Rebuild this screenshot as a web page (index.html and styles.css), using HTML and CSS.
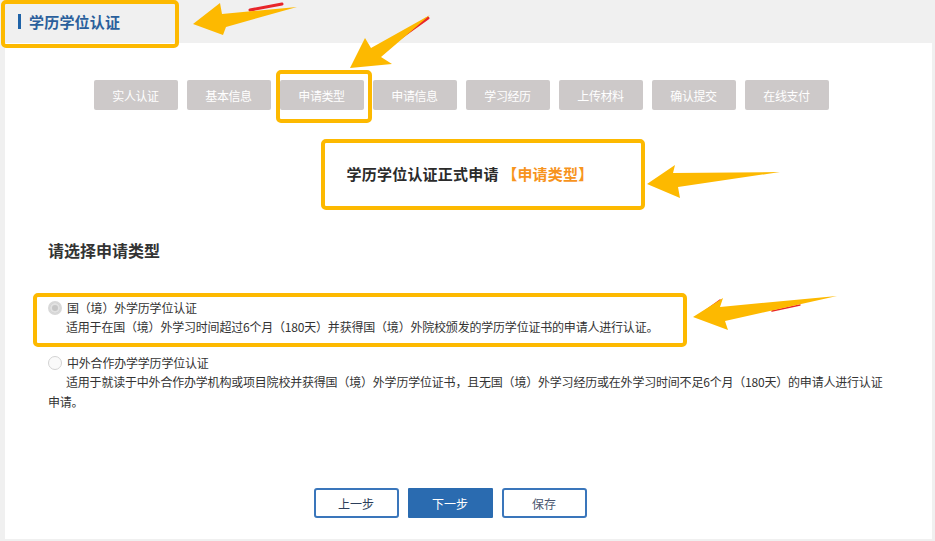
FILE: index.html
```html
<!DOCTYPE html>
<html lang="zh-CN">
<head>
<meta charset="utf-8">
<title>学历学位认证</title>
<link rel="stylesheet" href="styles.css">
</head>
<body>
<div class="page">
  <header class="header">
    <span class="header-bar"></span>
    <h1 class="header-title">学历学位认证</h1>
  </header>
  <main class="panel">
    <nav class="steps">
      <span class="step">实人认证</span>
      <span class="step">基本信息</span>
      <span class="step">申请类型</span>
      <span class="step">申请信息</span>
      <span class="step">学习经历</span>
      <span class="step">上传材料</span>
      <span class="step">确认提交</span>
      <span class="step">在线支付</span>
    </nav>
    <h2 class="form-title">学历学位认证正式申请 <span class="form-title-tag">【申请类型】</span></h2>
    <h3 class="section-title">请选择申请类型</h3>
    <div class="options">
      <div class="option">
        <div class="option-head"><span class="radio radio-checked"></span><span class="option-label">国（境）外学历学位认证</span></div>
        <p class="option-desc">适用于在国（境）外学习时间超过6个月（180天）并获得国（境）外院校颁发的学历学位证书的申请人进行认证。</p>
      </div>
      <div class="option">
        <div class="option-head"><span class="radio"></span><span class="option-label">中外合作办学学历学位认证</span></div>
        <p class="option-desc">适用于就读于中外合作办学机构或项目院校并获得国（境）外学历学位证书，且无国（境）外学习经历或在外学习时间不足6个月（180天）的申请人进行认证申请。</p>
      </div>
    </div>
    <div class="actions">
      <button class="btn btn-outline">上一步</button>
      <button class="btn btn-primary">下一步</button>
      <button class="btn btn-outline btn-muted">保存</button>
    </div>
  </main>
  <svg class="annotations" width="935" height="541" viewBox="0 0 935 541">
    <g fill="none" stroke="#fdb900" stroke-width="4" stroke-linejoin="round">
      <rect x="3" y="2" width="174" height="44" rx="3"/>
      <rect x="278" y="72" width="92" height="49" rx="3"/>
      <rect x="323" y="141" width="320" height="67" rx="3"/>
      <rect x="35" y="295" width="650" height="50" rx="3"/>
    </g>
    <g stroke="#e8262a" stroke-width="3" stroke-linecap="round" fill="none">
      <path d="M250 10 L282 4"/>
      <path d="M400 38 L428 18"/>
      <path d="M720 300 L698 316" stroke-width="1.5"/>
      <path d="M772 311 L800 305" stroke-width="1.5"/>
    </g>
    <g fill="#fdb900">
      <polygon points="193,24 220,3 222,14 297,7 226,27 223,35"/>
      <polygon points="350,68 365,38 371,48 430,15 381,57 392,64"/>
      <polygon points="647,184 675,165 673,173 780,172 678,187 680,198"/>
      <polygon points="693,317 723,298 720,307 837,296 725,321 728,330"/>
    </g>
  </svg>
</div>
</body>
</html>
```
FILE: styles.css
```css
* {
  box-sizing: border-box;
}

html, body {
  margin: 0;
  padding: 0;
}

body {
  background: #f0f0f0;
  font-family: "Noto Sans CJK SC", "Noto Sans", "Liberation Sans", sans-serif;
  color: #333;
  width: 935px;
  height: 541px;
  overflow: hidden;
}

.page {
  position: relative;
  width: 935px;
  height: 541px;
}

.header {
  height: 43px;
  display: flex;
  align-items: center;
  padding-left: 18px;
  gap: 8px;
}

.header-bar {
  width: 3px;
  height: 15px;
  background: #1f63a8;
}

.header-title {
  margin: 0;
  font-size: 15px;
  font-weight: 700;
  color: #2a5f9c;
  letter-spacing: 0.2px;
  line-height: 20px;
}

.panel {
  background: #fff;
  margin: 0 3px 0 5px;
  height: 496px;
  padding: 37px 40px 0 43px;
  display: flex;
  flex-direction: column;
}

.steps {
  display: flex;
  justify-content: center;
  gap: 9px;
  padding-left: 14px;
  padding-right: 32px;
}

.step {
  width: 84px;
  height: 30px;
  background: #cdc9c9;
  border-radius: 2px;
  color: #fff;
  font-size: 12px;
  letter-spacing: -0.4px;
  display: flex;
  align-items: center;
  justify-content: center;
}

.form-title {
  margin: 53px 0 0 0;
  text-align: center;
  font-size: 15px;
  font-weight: 700;
  color: #2b2b2b;
  line-height: 22px;
  letter-spacing: 0.2px;
}

.form-title-tag {
  color: #f7941d;
}

.section-title {
  margin: 54px 0 0 0;
  font-size: 16px;
  font-weight: 700;
  color: #333;
  line-height: 22px;
}

.options {
  margin-top: 37px;
  display: flex;
  flex-direction: column;
  gap: 16px;
  width: 846px;
}

.option {
  font-size: 12px;
  line-height: 19px;
  color: #333;
  letter-spacing: -0.2px;
}

.option-head {
  display: flex;
  align-items: center;
  gap: 5px;
}

.radio {
  width: 14px;
  height: 14px;
  border-radius: 50%;
  border: 1px solid #d3d3d3;
  background: #fafafa;
  flex: none;
}

.radio-checked {
  border: 2px solid #d8d8d8;
  background: #c6c6c6;
  box-shadow: inset 0 0 0 2px #e2e2e2;
}

.option-label {
  line-height: 19px;
}

.option-desc {
  margin: 0;
  text-indent: 18px;
  line-height: 20px;
}

.actions {
  margin-top: auto;
  margin-bottom: 21px;
  display: flex;
  justify-content: center;
  gap: 9px;
  padding-right: 40px;
}

.btn {
  width: 85px;
  height: 30px;
  border: 2px solid #3a76bb;
  border-radius: 3px;
  background: #fff;
  font-family: inherit;
  font-size: 12px;
  color: #2c3e5a;
  padding: 0;
  cursor: pointer;
}

.btn-primary {
  background: #2a6bb0;
  border-color: #2a6bb0;
  color: #fff;
  border-radius: 1px;
}

.btn-muted {
  color: #4a5670;
}

.annotations {
  position: absolute;
  left: 0;
  top: 0;
  pointer-events: none;
}
```
